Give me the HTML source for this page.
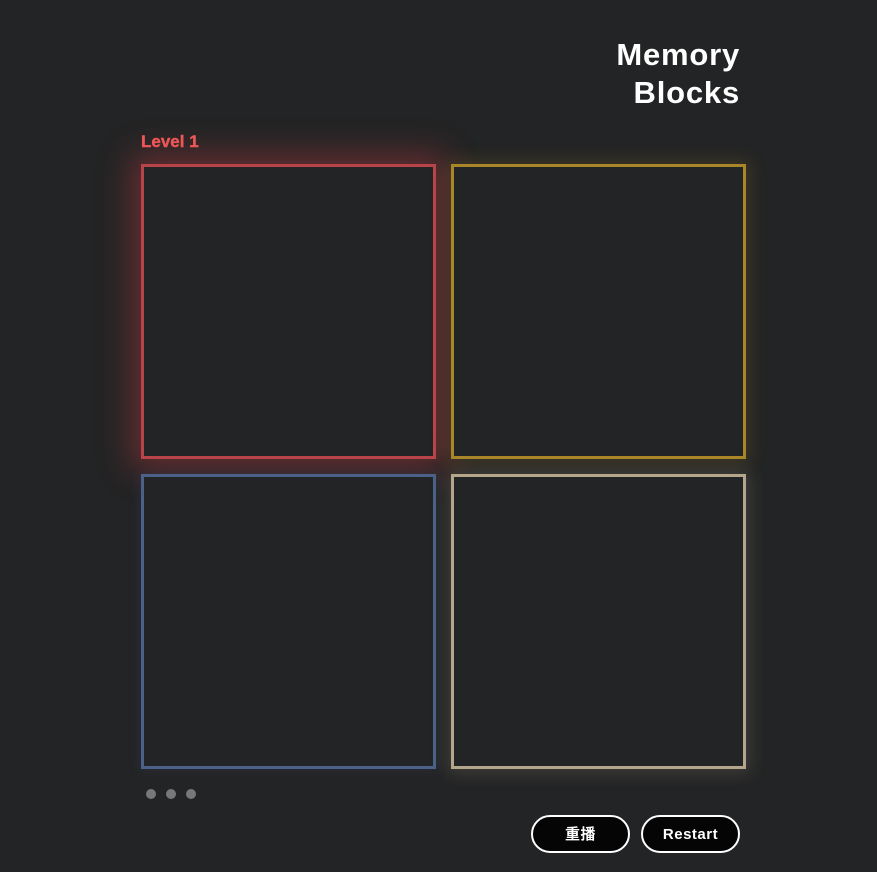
<!DOCTYPE html>
<html><head><meta charset="utf-8"><style>
body{margin:0;width:877px;height:872px;background:#232425;font-family:"Liberation Sans","Noto Sans CJK SC",sans-serif;position:relative;overflow:hidden}
.t{position:absolute;right:137px;top:36px;text-align:right;color:#fff;font-weight:bold;font-size:31px;line-height:38px;letter-spacing:0.8px}
.lv{position:absolute;left:141px;top:132px;color:#f05a5a;font-weight:bold;font-size:17px;-webkit-text-stroke:0.4px #f05a5a}
.b{position:absolute;width:289px;height:289px;border:3px solid;box-sizing:content-box;background:#232425}
.d{position:absolute;top:789px;width:10px;height:10px;border-radius:50%;background:#77787a}
.btn{position:absolute;top:815px;width:95px;height:34px;border:2px solid #fff;border-radius:19px;background:#050505;color:#fff;font-weight:bold;font-size:15px;text-align:center;line-height:35px;letter-spacing:0.5px}
</style></head><body>
<div class="t">Memory<br>Blocks</div>
<div class="lv">Level 1</div>
<div class="b" style="left:141px;top:164px;border-color:#b8444a;box-shadow:0 0 30px 10px rgba(200,60,65,.4)"></div>
<div class="b" style="left:451px;top:164px;border-color:#a98628;box-shadow:0 0 16px 4px rgba(170,130,40,.2)"></div>
<div class="b" style="left:141px;top:474px;border-color:#4b6189;box-shadow:0 0 10px 2px rgba(70,95,140,.15)"></div>
<div class="b" style="left:451px;top:474px;border-color:#b3a68a;box-shadow:0 0 16px 4px rgba(180,165,135,.2)"></div>
<div class="d" style="left:146px"></div><div class="d" style="left:166px"></div><div class="d" style="left:186px"></div>
<div class="btn" style="left:531px">重播</div>
<div class="btn" style="left:641px">Restart</div>
</body></html>
